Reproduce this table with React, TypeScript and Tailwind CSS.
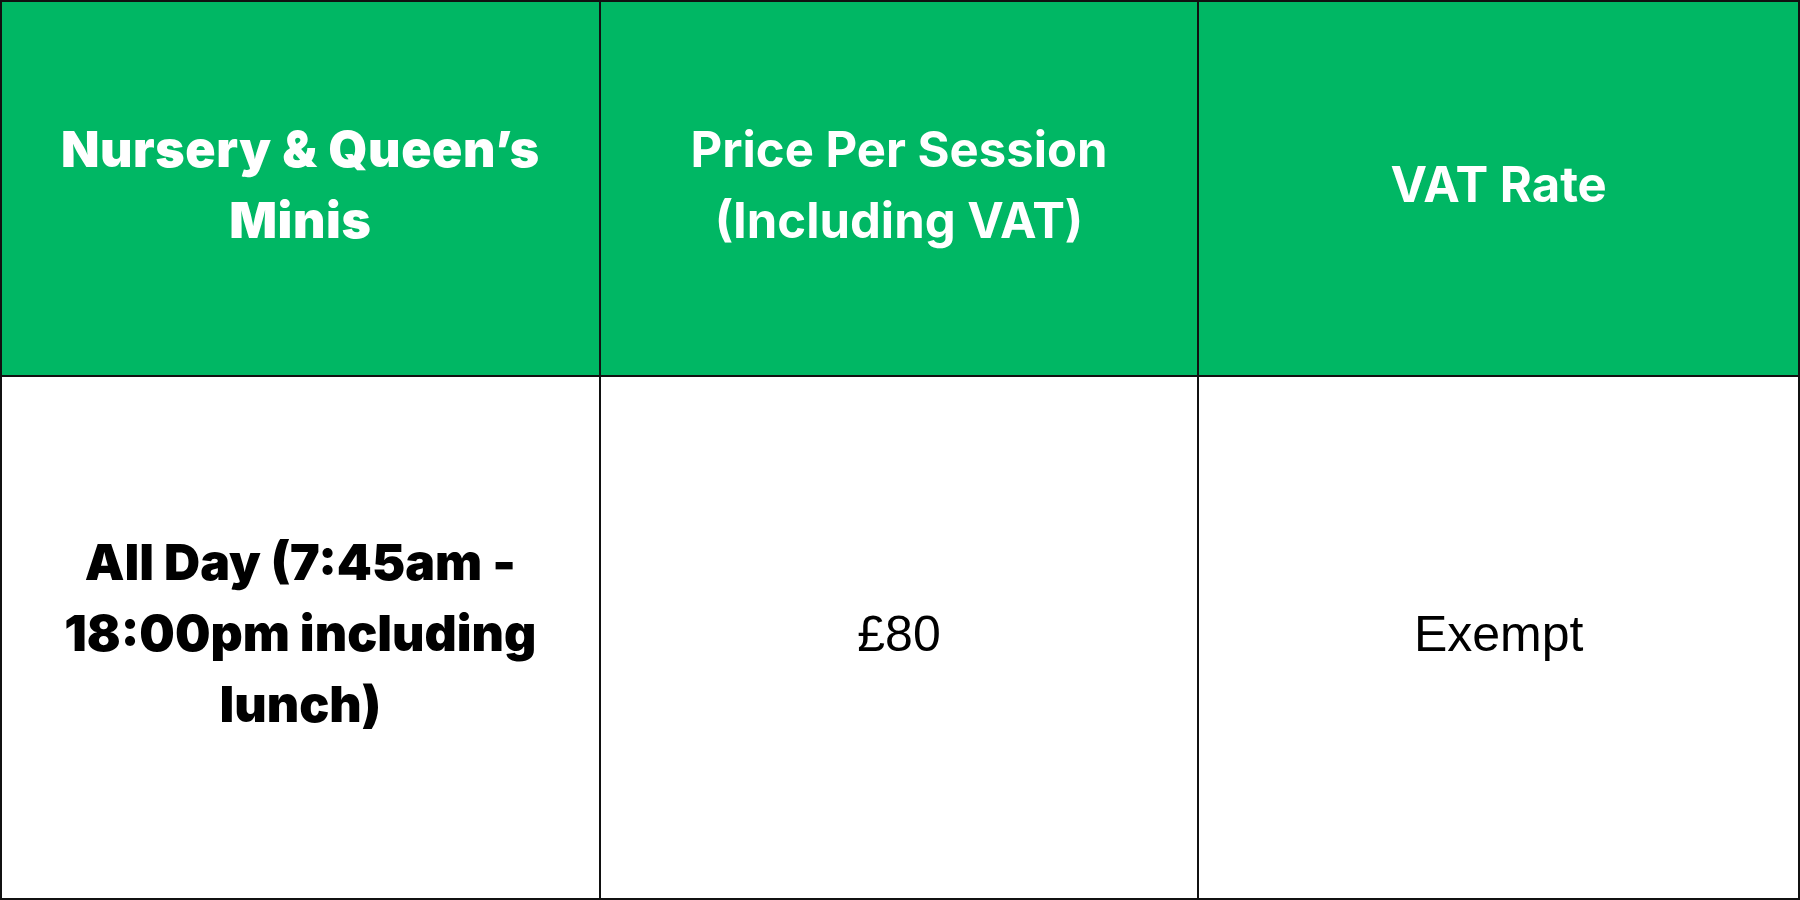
export default function App() {
  const heavy = 'font-["Inter","Liberation_Sans",sans-serif] font-black';
  const bold = 'font-["Inter","Liberation_Sans",sans-serif] font-bold';
  const plain = 'font-["Liberation_Sans","Arial",sans-serif] font-normal';

  return (
    <div className="w-[1800px] h-[900px] bg-white">
      <div className="w-full h-full border-2 border-[#111] grid grid-cols-3 grid-rows-[375px_1fr]">
        {/* header row */}
        <div className="bg-[#00b764] border-r-2 border-b-2 border-[#111] flex items-center justify-center pb-[8px]">
          <p className={`${heavy} text-white text-[50px] leading-[71px] text-center tracking-[0.6px]`}>
            Nursery &amp; Queen’s
            <br />
            Minis
          </p>
        </div>
        <div className="bg-[#00b764] border-r-2 border-b-2 border-[#111] flex items-center justify-center pb-[8px]">
          <p className={`${bold} text-white text-[49px] leading-[71px] text-center`}>
            Price Per Session
            <br />
            (Including VAT)
          </p>
        </div>
        <div className="bg-[#00b764] border-b-2 border-[#111] flex items-center justify-center pb-[8px]">
          <p className={`${bold} text-white text-[49px] leading-[71px] text-center`}>VAT Rate</p>
        </div>

        {/* body row */}
        <div className="border-r-2 border-[#111] flex items-center justify-center pb-[8px]">
          <p className={`${heavy} text-black text-[50px] leading-[71px] text-center`}>
            All Day (7:45am -
            <br />
            18:00pm including
            <br />
            lunch)
          </p>
        </div>
        <div className="border-r-2 border-[#111] flex items-center justify-center pb-[8px]">
          <p className={`${plain} text-black text-[50px] leading-[72px]`}>£80</p>
        </div>
        <div className="flex items-center justify-center pb-[8px]">
          <p className={`${plain} text-black text-[50px] leading-[72px]`}>Exempt</p>
        </div>
      </div>
    </div>
  );
}
